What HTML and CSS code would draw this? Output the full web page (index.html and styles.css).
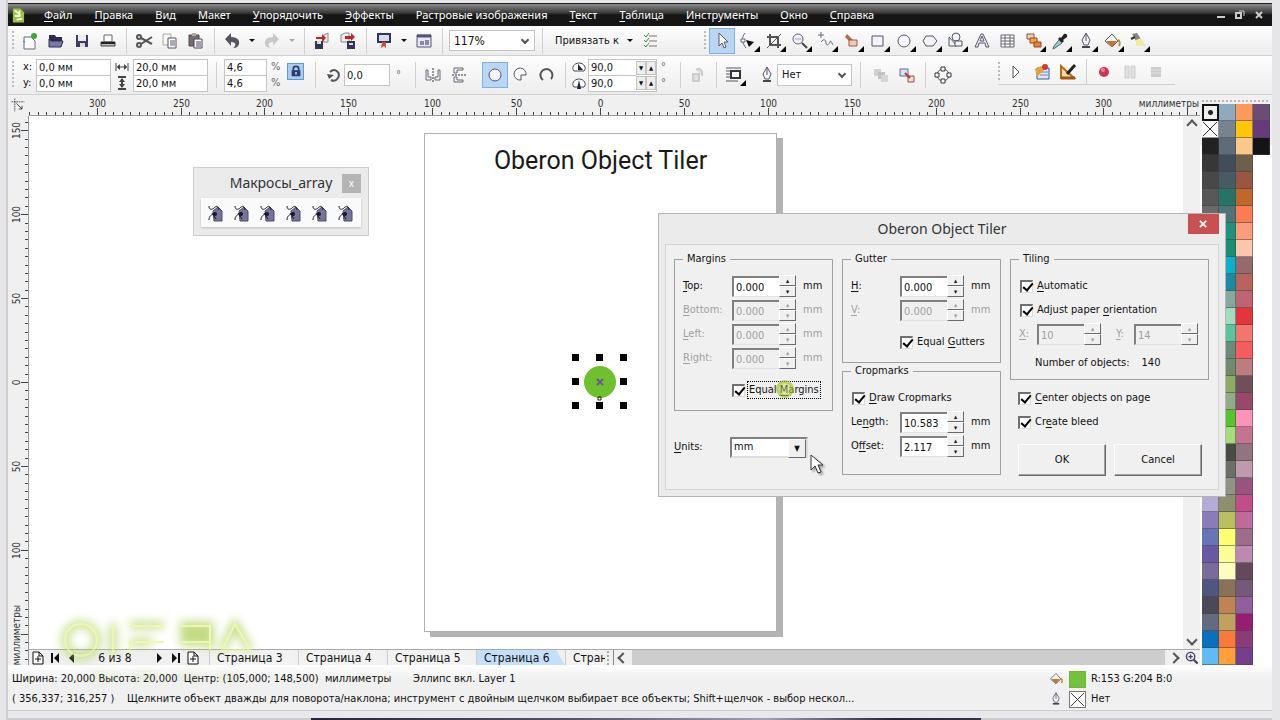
FILE: index.html
```html
<!DOCTYPE html>
<html lang="ru">
<head>
<meta charset="utf-8">
<title>Oberon Object Tiler</title>
<link rel="stylesheet" href="styles.css">
</head>
<body>
<svg class="defs" aria-hidden="true">
  <symbol id="i-new" viewBox="0 0 20 20"><path d="M4 6h7l4 4v8H4z" fill="#fbfbfb" stroke="#6b6b84"/><path d="M3 10l2 1" stroke="#6b6b84"/><circle cx="14" cy="5" r="3" fill="#3fa535"/></symbol>
  <symbol id="i-open" viewBox="0 0 20 20"><path d="M3 4h6l1 2h6v4H3z" fill="#2c2c52"/><path d="M3 16V8l2 2h12l-2 6z" fill="#7b7ba4" stroke="#2c2c52"/></symbol>
  <symbol id="i-save" viewBox="0 0 20 20"><path d="M4 4h12v12H4z" fill="#3c3c66"/><path d="M6 4h8v6H6z" fill="#eee"/><path d="M8 12h5v4H8z" fill="#ddd"/></symbol>
  <symbol id="i-print" viewBox="0 0 20 20"><path d="M6 4h8v7H6z" fill="#fff" stroke="#666"/><path d="M3 11h14v4H3z" fill="#bbb" stroke="#444"/><path d="M3 12h14" stroke="#222" stroke-width="2"/></symbol>
  <symbol id="i-cut" viewBox="0 0 20 20" fill="none" stroke="#555" stroke-width="2"><circle cx="5" cy="6" r="2"/><circle cx="5" cy="14" r="2"/><path d="M7 7l11 6M7 13l11-7"/></symbol>
  <symbol id="i-copy" viewBox="0 0 20 20"><path d="M3 3h8v11H3z" fill="#f4f4f4" stroke="#aaa"/><path d="M8 7h8v10H8z" fill="#fff" stroke="#555"/><path d="M10 10h5M10 12h5M10 14h5" stroke="#555577"/></symbol>
  <symbol id="i-paste" viewBox="0 0 20 20"><path d="M3 4h10v11H3z" fill="#7a6b66" stroke="#4f4a50"/><path d="M6 2h4v3H6z" fill="#aaa"/><path d="M8 8h8v9H8z" fill="#fff" stroke="#444466"/><path d="M10 11h5M10 13h5M10 15h5" stroke="#444466"/></symbol>
  <symbol id="i-undo" viewBox="0 0 20 20"><path d="M3 8l6-6v4c6 0 9 3 8 7-1 3-3 4-6 4 3-2 4-6-2-6v4z" fill="#555562"/></symbol>
  <symbol id="i-redo" viewBox="0 0 20 20"><path d="M17 8l-6-6v4c-6 0-9 3-8 7 1 3 3 4 6 4-3-2-4-6 2-6v4z" fill="#c9c9c9"/></symbol>
  <symbol id="i-import" viewBox="0 0 20 20"><path d="M12 4l4-2v9h-5z" fill="#eee" stroke="#888"/><path d="M3 10h8v8H3z" fill="#33335c"/><path d="M5 10h4v3H5z" fill="#ddd"/><path d="M4 6h6V3l4 4-4 4V8H4z" fill="#c02428"/></symbol>
  <symbol id="i-export" viewBox="0 0 20 20"><path d="M3 4l4-2h4v9H3z" fill="#eee" stroke="#888"/><path d="M9 10h8v8H9z" fill="#33335c"/><path d="M11 12h4v2h-4z" fill="#ddd"/><path d="M7 5h6V2l4 4-4 4V8H7z" fill="#c02428"/></symbol>
  <symbol id="i-launch" viewBox="0 0 20 20"><path d="M4 3h12v8H4z" fill="#d8dcf0" stroke="#33335c" stroke-width="2"/><path d="M8 11h4v6l-2-2-3 2z" fill="#d44a30"/></symbol>
  <symbol id="i-welcome" viewBox="0 0 20 20"><path d="M3 4h14v12H3z" fill="#e6e8f4" stroke="#555577"/><path d="M3 5h14" stroke="#555577" stroke-width="3"/><path d="M6 10h4v4H6zM11 9h4v5h-4z" fill="#88a"/></symbol>
  <symbol id="i-options" viewBox="0 0 20 20" fill="none"><path d="M9 5h8M9 10h8M9 15h8" stroke="#777"/><path d="M4 4l2 2 3-4M4 9l2 2 3-4M4 14l2 2 3-4" stroke="#3c8c3c"/></symbol>
  <symbol id="i-pick" viewBox="0 0 20 20"><path d="M7 2v13l3-3 2 5 2-1-2-5h4z" fill="#fff" stroke="#556"/></symbol>
  <symbol id="i-shape" viewBox="0 0 20 20"><path d="M7 2c-4 5-3 10 1 15" fill="none" stroke="#667"/><path d="M3 8h4v3H3z" fill="#fff" stroke="#667"/><path d="M8 9l8 2-5 5z" fill="#111"/></symbol>
  <symbol id="i-crop" viewBox="0 0 20 20" fill="none" stroke="#555"><path d="M3 6h11v11M6 3v11h11" stroke-width="2"/><path d="M3 17L17 3"/></symbol>
  <symbol id="i-zoom" viewBox="0 0 20 20"><circle cx="8" cy="8" r="5" fill="#eef" stroke="#667"/><path d="M12 12l5 5" stroke="#445" stroke-width="2"/><path d="M5 8h6" stroke="#aab"/></symbol>
  <symbol id="i-zoomto" viewBox="0 0 20 20"><circle cx="8" cy="8" r="6" fill="#eef" stroke="#446" stroke-width="2"/><path d="M12 12l6 6" stroke="#445" stroke-width="3"/><path d="M5 8h6M8 5v6" stroke="#446" stroke-width="2"/></symbol>
  <symbol id="i-free" viewBox="0 0 20 20" fill="none" stroke="#667"><path d="M5 1v6M2 4h6M5 11c3-4 5-2 5 1s3 2 4-1 2 2 3 3"/></symbol>
  <symbol id="i-smart" viewBox="0 0 20 20"><path d="M5 3l6 6-3 2-5-5z" fill="#b46a4c"/><path d="M7 9h8v6H7z" fill="#eecdb4" stroke="#a0543c"/></symbol>
  <symbol id="i-rect" viewBox="0 0 20 20"><path d="M4 5h11v10H4z" fill="#f2f2fa" stroke="#556"/></symbol>
  <symbol id="i-ellipse" viewBox="0 0 20 20"><circle cx="10" cy="10" r="6" fill="#f4f4fa" stroke="#556"/></symbol>
  <symbol id="i-poly" viewBox="0 0 20 20"><path d="M3 10l3-5h7l4 5-4 5H6z" fill="#f2f2fa" stroke="#556"/></symbol>
  <symbol id="i-shapes" viewBox="0 0 20 20" fill="#f2f2fa" stroke="#556"><path d="M3 6l8 9H3z"/><circle cx="10" cy="6" r="4"/><path d="M9 10h7v5H9z"/></symbol>
  <symbol id="i-letter" viewBox="0 0 20 20"><path d="M3 16L9 3h2l6 13h-3l-1-4H7l-1 4zM8 10h4l-2-5z" fill="#f2f2fa" stroke="#556"/></symbol>
  <symbol id="i-table" viewBox="0 0 20 20"><path d="M3 4h13v12H3zM3 7h13M3 10h13M3 13h13M7 4v12M12 4v12" fill="#fff" stroke="#667"/></symbol>
  <symbol id="i-blend" viewBox="0 0 20 20"><path d="M3 3h7v5H3z" fill="#e8d8a8" stroke="#855"/><path d="M6 7h7v5H6z" fill="#f4a83c" stroke="#943"/><path d="M10 11h7v5h-7z" fill="#f08020" stroke="#943"/></symbol>
  <symbol id="i-dropper" viewBox="0 0 20 20"><path d="M11 7l3-4c2-1 4 1 3 3l-4 3 1 1-2 2-4-4 2-2z" fill="#222"/><path d="M9 9l3 3-7 5-2 1 1-3z" fill="#9cc" stroke="#566"/></symbol>
  <symbol id="i-pen" viewBox="0 0 20 20"><path d="M10 2l4 7-2 5H8L6 9zM10 3v7" fill="#f4f4fa" stroke="#556"/><path d="M6 16h8" stroke="#445" stroke-width="2"/></symbol>
  <symbol id="i-bucket" viewBox="0 0 20 20"><path d="M3 10l7-7 6 7-6 6z" fill="#fff" stroke="#555"/><path d="M4 10h11l-5 6z" fill="#c8742c"/><path d="M16 9c2 1 2 4 1 6" fill="none" stroke="#c8882c" stroke-width="2"/></symbol>
  <symbol id="i-ifill" viewBox="0 0 20 20"><path d="M4 3l5-1 4 6-5 2z" fill="#888"/><path d="M3 8l4-2" stroke="#333" stroke-width="2"/><path d="M8 9l5-2 5 8H8z" fill="#eeeaa0"/></symbol>
  <symbol id="i-width" viewBox="0 0 16 16"><path d="M2 4v8M14 4v8M3 8h10M5 6v4M11 6v4" fill="none" stroke="#444"/><path d="M3 8l3-3v6zM13 8l-3-3v6z" fill="#444"/></symbol>
  <symbol id="i-height" viewBox="0 0 16 16"><path d="M4 2h8M4 14h8M8 4v8" fill="none" stroke="#444" stroke-width="2"/><path d="M8 3l-3 4h6zM8 13l-3-4h6z" fill="#444"/></symbol>
  <symbol id="i-lock" viewBox="0 0 16 16"><path d="M3 7h10v7H3z" fill="#2c3c6c"/><path d="M5 7V5c0-3 6-3 6 0v2" fill="none" stroke="#2c3c6c" stroke-width="2"/><path d="M7 9h2v3H7z" fill="#a9cdf2"/></symbol>
  <symbol id="i-rotate" viewBox="0 0 20 20"><path d="M6 7c5-5 11 1 8 6-2 3-5 3-7 2" fill="none" stroke="#555" stroke-width="2"/><path d="M3 9l7 1-5 4z" fill="#555"/></symbol>
  <symbol id="i-mirh" viewBox="0 0 20 20" fill="none" stroke="#667"><path d="M3 5v10h5v-3H5V5zM17 5v10h-5v-3h3V5z"/><path d="M10 3v14" stroke-dasharray="2 1" stroke="#333"/></symbol>
  <symbol id="i-mirv" viewBox="0 0 20 20" fill="none" stroke="#667"><path d="M5 3h9v2H8v3H5zM5 17h9v-2H8v-3H5z"/><path d="M3 10h14" stroke-dasharray="2 1" stroke="#333"/></symbol>
  <symbol id="i-pie" viewBox="0 0 20 20"><path d="M10 10h5A6 6 0 1 0 10 15z" fill="#f8f8f8" stroke="#556"/></symbol>
  <symbol id="i-arc" viewBox="0 0 20 20"><path d="M14 14a6 6 0 1 0-8 1" fill="none" stroke="#555" stroke-width="2"/></symbol>
  <symbol id="i-start" viewBox="0 0 16 16"><path d="M3 12c-3-3 0-8 5-8s8 5 5 8z" fill="#fff" stroke="#445"/><path d="M7 5l5 6H7z" fill="#223"/></symbol>
  <symbol id="i-end" viewBox="0 0 16 16"><path d="M3 12c-3-3 0-8 5-8s8 5 5 8z" fill="#fff" stroke="#445"/><path d="M8 5l2 9H6z" fill="#223"/></symbol>
  <symbol id="i-dir" viewBox="0 0 20 20"><path d="M5 9h6v7H5zM8 5c4-3 7 1 6 6" fill="#e2e2e2" stroke="#ccc" stroke-width="2"/></symbol>
  <symbol id="i-wrap" viewBox="0 0 20 20"><path d="M2 3h15M2 6h4M2 9h4M2 12h4M2 16h12" stroke="#556"/><path d="M7 6h9v7H7z" fill="#fff" stroke="#334" stroke-width="2"/></symbol>
  <symbol id="i-front" viewBox="0 0 20 20"><path d="M3 4h7v7H3z" fill="#d2d2d2"/><path d="M7 7h7v7H7z" fill="#c2c2c2"/><path d="M10 10h7v7h-7z" fill="#d6d6d6"/></symbol>
  <symbol id="i-back" viewBox="0 0 20 20"><path d="M3 4h8v7H3z" fill="#d8e4f0" stroke="#668"/><path d="M11 11h6v6h-6z" fill="#f2dcd4" stroke="#854"/><path d="M8 8l5 5" stroke="#c33" stroke-width="2"/></symbol>
  <symbol id="i-curve" viewBox="0 0 20 20"><circle cx="10" cy="10" r="6" fill="none" stroke="#556"/><path d="M8 2h4v4H8zM8 14h4v4H8zM2 8h4v4H2zM14 8h4v4h-4z" fill="#fff" stroke="#334"/></symbol>
  <symbol id="i-play" viewBox="0 0 20 20"><path d="M7 4l6 6-6 6z" fill="#fff" stroke="#555"/></symbol>
  <symbol id="i-macro" viewBox="0 0 20 20"><path d="M5 6h12v11H5z" fill="#dce8fa" stroke="#345c9c"/><path d="M8 10h8M8 13h8" stroke="#68c"/><path d="M3 7l6-3 4 3-8 8z" fill="#e8a040"/><circle cx="13" cy="5" r="3" fill="#cc3a30"/></symbol>
  <symbol id="i-vba" viewBox="0 0 20 20"><path d="M3 4v12h13z" fill="#f4d8a0" stroke="#b46a1c" stroke-width="2"/><path d="M3 16h14" stroke="#a0540c" stroke-width="3"/><path d="M9 12l8-9" stroke="#222" stroke-width="3"/></symbol>
  <symbol id="i-rec" viewBox="0 0 20 20"><circle cx="10" cy="10" r="5" fill="#cf3450"/><circle cx="9" cy="8" r="2" fill="#ea8898"/></symbol>
  <symbol id="i-pause" viewBox="0 0 20 20"><path d="M5 4h4v12H5zM11 4h4v12h-4z" fill="#e0e0e0" stroke="#ccc"/></symbol>
  <symbol id="i-stop" viewBox="0 0 20 20"><path d="M5 5h10v10H5z" fill="#ccc"/><path d="M5 8h10M5 11h10" stroke="#ddd"/></symbol>
  <symbol id="i-script" viewBox="0 0 20 20"><path d="M8 8l5-4 4 4v10H9z" fill="#77749c" stroke="#4b4870"/><path d="M4 3c0 4 3 4 5 2s4-3 5 2M4 17c0-4 2-5 6-7M7 10l4 6" fill="none" stroke="#16162a"/><circle cx="10" cy="11" r="2" fill="#16162a"/></symbol>
  <symbol id="i-page" viewBox="0 0 16 16"><path d="M3 2h6l4 4v8H3zM9 2v4h4M5 9h6M8 6v6" fill="#fff" stroke="#111"/></symbol>
  <symbol id="i-prev" viewBox="0 0 16 16"><path d="M10 3v10L5 8z" fill="#111"/></symbol>
  <symbol id="i-next" viewBox="0 0 16 16"><path d="M6 3v10l5-5z" fill="#111"/></symbol>
  <symbol id="i-first" viewBox="0 0 16 16"><path d="M12 3v10L7 8zM4 3h2v10H4z" fill="#111"/></symbol>
  <symbol id="i-last" viewBox="0 0 16 16"><path d="M4 3v10l5-5zM10 3h2v10h-2z" fill="#111"/></symbol>
  <symbol id="i-origin" viewBox="0 0 20 20"><path d="M2 6h16M6 2v16" stroke="#222" stroke-dasharray="2 1"/><path d="M8 8l7 7M15 11v4h-4" fill="none" stroke="#222"/></symbol>
  <symbol id="i-none" viewBox="0 0 17 17"><path d="M0 0h17v17H0z" fill="#fff"/><path d="M1 1l15 15M16 1L1 16" stroke="#222"/></symbol>
</svg>

<header class="menubar">
  <svg class="logo" viewBox="0 0 14 17"><path d="M1 1h8l4 4v11H1z" fill="#9ec23c"/><path d="M3 3l6 5M8 3v6H3M5 13l6-1" stroke="#f4fadc" stroke-width="2" fill="none"/></svg>
  <nav class="menu">
    <a href="#"><u>Ф</u>айл</a><a href="#"><u>П</u>равка</a><a href="#"><u>В</u>ид</a><a href="#"><u>М</u>акет</a><a href="#"><u>У</u>порядочить</a><a href="#"><u>Э</u>ффекты</a><a href="#">Р<u>а</u>стровые изображения</a><a href="#"><u>Т</u>екст</a><a href="#"><u>Т</u>аблица</a><a href="#"><u>И</u>нструменты</a><a href="#"><u>О</u>кно</a><a href="#"><u>С</u>правка</a>
  </nav>
  <div class="winbtns">
    <button aria-label="Свернуть"><svg viewBox="0 0 10 10"><path d="M1 7h8" stroke="#ccc" stroke-width="2"/></svg></button>
    <button aria-label="Восстановить"><svg viewBox="0 0 10 10" fill="none" stroke="#ccc"><path d="M1 3h5v5H1z" stroke-width="2"/><path d="M4 1h5v5"/></svg></button>
    <button aria-label="Закрыть"><svg viewBox="0 0 10 10"><path d="M2 2l6 6M8 2L2 8" stroke="#ccc" stroke-width="2"/></svg></button>
  </div>
</header>

<div class="bar bar-main">
  <span class="grip"></span>
  <button class="tb" aria-label="Создать"><svg><use href="#i-new"/></svg></button>
  <button class="tb" aria-label="Открыть"><svg><use href="#i-open"/></svg></button>
  <button class="tb" aria-label="Сохранить"><svg><use href="#i-save"/></svg></button>
  <button class="tb" aria-label="Печать"><svg><use href="#i-print"/></svg></button>
  <span class="sep"></span>
  <button class="tb" aria-label="Вырезать"><svg><use href="#i-cut"/></svg></button>
  <button class="tb" aria-label="Копировать"><svg><use href="#i-copy"/></svg></button>
  <button class="tb" aria-label="Вставить"><svg><use href="#i-paste"/></svg></button>
  <span class="sep"></span>
  <button class="tb" aria-label="Отменить"><svg><use href="#i-undo"/></svg></button>
  <button class="drop" aria-label="История отмены"></button>
  <button class="tb" aria-label="Повторить"><svg><use href="#i-redo"/></svg></button>
  <button class="drop off" aria-label="История повтора"></button>
  <span class="sep"></span>
  <button class="tb" aria-label="Импорт"><svg><use href="#i-import"/></svg></button>
  <button class="tb" aria-label="Экспорт"><svg><use href="#i-export"/></svg></button>
  <span class="sep"></span>
  <button class="tb" aria-label="Запуск приложений"><svg><use href="#i-launch"/></svg></button>
  <button class="drop" aria-label="Приложения"></button>
  <button class="tb" aria-label="Экран приветствия"><svg><use href="#i-welcome"/></svg></button>
  <span class="sep"></span>
  <span class="combo zoomlevel"><select aria-label="Масштаб"><option>117%</option></select></span>
  <span class="sep"></span>
  <button class="snap">Привязать к</button>
  <button class="drop" aria-label="Привязка"></button>
  <button class="tb" aria-label="Параметры"><svg><use href="#i-options"/></svg></button>
  <div class="toolbox">
    <span class="grip"></span>
    <button class="tb on" aria-label="Указатель"><svg><use href="#i-pick"/></svg></button>
    <button class="tb fly" aria-label="Форма"><svg><use href="#i-shape"/></svg></button>
    <button class="tb fly" aria-label="Обрезка"><svg><use href="#i-crop"/></svg></button>
    <button class="tb fly" aria-label="Лупа"><svg><use href="#i-zoom"/></svg></button>
    <button class="tb fly" aria-label="Свободная форма"><svg><use href="#i-free"/></svg></button>
    <button class="tb fly" aria-label="Интеллектуальная заливка"><svg><use href="#i-smart"/></svg></button>
    <button class="tb fly" aria-label="Прямоугольник"><svg><use href="#i-rect"/></svg></button>
    <button class="tb fly" aria-label="Эллипс"><svg><use href="#i-ellipse"/></svg></button>
    <button class="tb fly" aria-label="Многоугольник"><svg><use href="#i-poly"/></svg></button>
    <button class="tb fly" aria-label="Основные фигуры"><svg><use href="#i-shapes"/></svg></button>
    <button class="tb" aria-label="Текст"><svg><use href="#i-letter"/></svg></button>
    <button class="tb" aria-label="Таблица"><svg><use href="#i-table"/></svg></button>
    <button class="tb fly" aria-label="Перетекание"><svg><use href="#i-blend"/></svg></button>
    <button class="tb fly" aria-label="Пипетка"><svg><use href="#i-dropper"/></svg></button>
    <button class="tb fly" aria-label="Абрис"><svg><use href="#i-pen"/></svg></button>
    <button class="tb fly" aria-label="Заливка"><svg><use href="#i-bucket"/></svg></button>
    <button class="tb fly" aria-label="Интерактивная заливка"><svg><use href="#i-ifill"/></svg></button>
  </div>
</div>

<div class="bar bar-props">
  <span class="grip tall"></span>
  <div class="pair marks"><label for="px">x:</label><label for="py">y:</label></div>
  <div class="pair w-pos"><input id="px" value="0,0 мм"><input id="py" value="0,0 мм"></div>
  <div class="pair glyphs"><svg><use href="#i-width"/></svg><svg><use href="#i-height"/></svg></div>
  <div class="pair w-pos"><input aria-label="Ширина" value="20,0 мм"><input aria-label="Высота" value="20,0 мм"></div>
  <span class="sep wide"></span>
  <div class="pair w-scale"><input aria-label="Масштаб по x" value="4,6"><input aria-label="Масштаб по y" value="4,6"></div>
  <div class="pair percent"><span>%</span><span>%</span></div>
  <button class="lock" aria-label="Сохранять пропорции"><svg><use href="#i-lock"/></svg></button>
  <span class="sep xwide"></span>
  <svg class="ic"><use href="#i-rotate"/></svg>
  <input class="angle" aria-label="Угол поворота" value="0,0"><span class="deg">°</span>
  <span class="sep"></span>
  <button class="tb" aria-label="Отразить по горизонтали"><svg><use href="#i-mirh"/></svg></button>
  <button class="tb" aria-label="Отразить по вертикали"><svg><use href="#i-mirv"/></svg></button>
  <span class="sep bare"></span>
  <button class="tb on" aria-label="Эллипс"><svg><use href="#i-ellipse"/></svg></button>
  <button class="tb" aria-label="Сектор"><svg><use href="#i-pie"/></svg></button>
  <button class="tb" aria-label="Дуга"><svg><use href="#i-arc"/></svg></button>
  <span class="sep"></span>
  <div class="pair glyphs tight"><svg><use href="#i-start"/></svg><svg><use href="#i-end"/></svg></div>
  <div class="pair w-arc"><input aria-label="Начальный угол" value="90,0"><input aria-label="Конечный угол" value="90,0"></div>
  <div class="ministeps"><button aria-label="Меньше">▼</button><button aria-label="Больше">▲</button><button aria-label="Меньше">▼</button><button aria-label="Больше">▲</button></div>
  <div class="pair percent"><span>°</span><span>°</span></div>
  <span class="sep"></span>
  <button class="tb" aria-label="Направление"><svg><use href="#i-dir"/></svg></button>
  <span class="sep"></span>
  <button class="tb fly" aria-label="Обтекание текстом"><svg><use href="#i-wrap"/></svg></button>
  <span class="sep bare"></span>
  <svg class="ic"><use href="#i-pen"/></svg>
  <span class="combo outline"><select aria-label="Толщина абриса"><option>Нет</option></select></span>
  <span class="sep wide"></span>
  <button class="tb" aria-label="На передний план"><svg><use href="#i-front"/></svg></button>
  <button class="tb" aria-label="На задний план"><svg><use href="#i-back"/></svg></button>
  <span class="sep"></span>
  <button class="tb" aria-label="Преобразовать в кривую"><svg><use href="#i-curve"/></svg></button>
  <div class="macrobar">
    <span class="grip"></span>
    <button class="tb" aria-label="Выполнить"><svg><use href="#i-play"/></svg></button>
    <button class="tb" aria-label="Диспетчер макросов"><svg><use href="#i-macro"/></svg></button>
    <button class="tb" aria-label="Редактор"><svg><use href="#i-vba"/></svg></button>
    <span class="sep"></span>
    <button class="tb" aria-label="Запись"><svg><use href="#i-rec"/></svg></button>
    <button class="tb" aria-label="Пауза"><svg><use href="#i-pause"/></svg></button>
    <button class="tb" aria-label="Стоп"><svg><use href="#i-stop"/></svg></button>
  </div>
</div>

<main class="workspace">
  <div class="corner"><svg><use href="#i-origin"/></svg></div>
  <svg class="ruler ruler-h" id="rulerH"></svg>
  <svg class="ruler ruler-v" id="rulerV"></svg>
  <section class="canvas">
    <div class="sheet"><h1>Oberon Object Tiler</h1></div>
    <svg class="selection" viewBox="0 0 56 56">
      <circle cx="28" cy="28" r="16" fill="#6ec02e"/>
      <path d="M25 25l6 6M31 25l-6 6" stroke="#6a5a9c" stroke-width="2"/>
      <path d="M26 43h3v3h-3z" fill="none" stroke="#222"/>
      <path d="M0 0h7v7H0zM24 0h7v7h-7zM48 0h7v7h-7zM0 24h7v7H0zM48 24h7v7h-7zM0 48h7v7H0zM24 48h7v7h-7zM48 48h7v7h-7z" fill="#000"/>
    </svg>
    <aside class="floatbar">
      <div class="floatbar-head"><span>Макросы_array</span><button aria-label="Закрыть">x</button></div>
      <div class="floatbar-body">
        <button class="tb" aria-label="Макрос 1"><svg><use href="#i-script"/></svg></button><button class="tb" aria-label="Макрос 2"><svg><use href="#i-script"/></svg></button><button class="tb" aria-label="Макрос 3"><svg><use href="#i-script"/></svg></button><button class="tb" aria-label="Макрос 4"><svg><use href="#i-script"/></svg></button><button class="tb" aria-label="Макрос 5"><svg><use href="#i-script"/></svg></button><button class="tb" aria-label="Макрос 6"><svg><use href="#i-script"/></svg></button>
      </div>
    </aside>
  </section>
  <div class="vscroll"><button class="chev up" aria-label="Вверх"></button><div class="vthumb"></div><button class="chev down" aria-label="Вниз"></button></div>
  <div class="palette"><span class="palette-grip"></span><div class="swatches" id="swatches"></div></div>
  <footer class="pages">
    <div class="pagenav">
      <button aria-label="Добавить страницу в начало"><svg><use href="#i-page"/></svg></button>
      <button aria-label="Первая"><svg><use href="#i-first"/></svg></button>
      <button aria-label="Предыдущая"><svg><use href="#i-prev"/></svg></button>
      <span class="count">6 из 8</span>
      <button aria-label="Следующая"><svg><use href="#i-next"/></svg></button>
      <button aria-label="Последняя"><svg><use href="#i-last"/></svg></button>
      <button aria-label="Добавить страницу в конец"><svg><use href="#i-page"/></svg></button>
    </div>
    <div class="tabs"><button>Страница 3</button><button>Страница 4</button><button>Страница 5</button><button class="active">Страница 6</button><button class="rest">Стран</button></div>
    <span class="split"></span>
    <div class="hscroll"><button class="chev left" aria-label="Влево"></button><div class="hthumb"></div><button class="chev right" aria-label="Вправо"></button></div>
    <button class="nav" aria-label="Навигатор"><svg><use href="#i-zoomto"/></svg></button>
  </footer>
</main>

<div class="status">
  <div class="line"><span class="dims">Ширина: 20,000 Высота: 20,000&nbsp; Центр: (105,000; 148,500)&nbsp; миллиметры</span><span class="object">Эллипс вкл. Layer 1</span>
    <span class="chip"><svg><use href="#i-bucket"/></svg><i class="fill"></i>R:153 G:204 B:0</span></div>
  <div class="line"><span class="coords">( 356,337; 316,257 )</span><span class="hint">Щелкните объект дважды для поворота/наклона; инструмент с двойным щелчком выбирает все объекты; Shift+щелчок - выбор нескол...</span>
    <span class="chip"><svg><use href="#i-pen"/></svg><svg class="nofill"><use href="#i-none"/></svg>Нет</span></div>
</div>
<div class="taskedge"></div>

<form class="dialog" role="dialog" aria-label="Oberon Object Tiler">
  <div class="dialog-head"><h2>Oberon Object Tiler</h2><button type="button" class="close" aria-label="Закрыть"><svg viewBox="0 0 10 10"><path d="M1 1l7 7M8 1L1 8" stroke="#fff" stroke-width="2"/></svg></button></div>
  <div class="dialog-body">
    <div class="col">
      <fieldset><legend>Margins</legend>
        <div class="row"><label for="mt"><u>T</u>op:</label><input id="mt" class="num" value="0.000"><span class="spin"><button type="button" aria-label="Больше">▴</button><button type="button" aria-label="Меньше">▾</button></span><span>mm</span></div>
        <div class="row off"><label for="mb"><u>B</u>ottom:</label><input id="mb" class="num" value="0.000" disabled><span class="spin"><button type="button" disabled aria-label="Больше">▴</button><button type="button" disabled aria-label="Меньше">▾</button></span><span>mm</span></div>
        <div class="row off"><label for="ml"><u>L</u>eft:</label><input id="ml" class="num" value="0.000" disabled><span class="spin"><button type="button" disabled aria-label="Больше">▴</button><button type="button" disabled aria-label="Меньше">▾</button></span><span>mm</span></div>
        <div class="row off"><label for="mr"><u>R</u>ight:</label><input id="mr" class="num" value="0.000" disabled><span class="spin"><button type="button" disabled aria-label="Больше">▴</button><button type="button" disabled aria-label="Меньше">▾</button></span><span>mm</span></div>
        <div class="check inset spaced focus"><input type="checkbox" id="em" checked><label for="em">Equal <u>M</u>argins</label></div>
      </fieldset>
      <div class="units"><label for="un"><u>U</u>nits:</label><span class="classic"><select id="un"><option>mm</option></select></span></div>
    </div>
    <div class="col">
      <fieldset><legend>Gutter</legend>
        <div class="row"><label for="gh"><u>H</u>:</label><input id="gh" class="num" value="0.000"><span class="spin"><button type="button" aria-label="Больше">▴</button><button type="button" aria-label="Меньше">▾</button></span><span>mm</span></div>
        <div class="row off"><label for="gv"><u>V</u>:</label><input id="gv" class="num" value="0.000" disabled><span class="spin"><button type="button" disabled aria-label="Больше">▴</button><button type="button" disabled aria-label="Меньше">▾</button></span><span>mm</span></div>
        <div class="check inset spaced"><input type="checkbox" id="eg" checked><label for="eg">Equal <u>G</u>utters</label></div>
      </fieldset>
      <fieldset class="crop"><legend>Cropmarks</legend>
        <div class="check"><input type="checkbox" id="dc" checked><label for="dc"><u>D</u>raw Cropmarks</label></div>
        <div class="row"><label for="cl">Le<u>n</u>gth:</label><input id="cl" class="num" value="10.583"><span class="spin"><button type="button" aria-label="Больше">▴</button><button type="button" aria-label="Меньше">▾</button></span><span>mm</span></div>
        <div class="row"><label for="co">O<u>f</u>fset:</label><input id="co" class="num" value="2.117"><span class="spin"><button type="button" aria-label="Больше">▴</button><button type="button" aria-label="Меньше">▾</button></span><span>mm</span></div>
      </fieldset>
    </div>
    <div class="col last">
      <fieldset class="tiling"><legend>Tiling</legend>
        <div class="check"><input type="checkbox" id="au" checked><label for="au"><u>A</u>utomatic</label></div>
        <div class="check"><input type="checkbox" id="ap" checked><label for="ap">Adjust paper <u>o</u>rientation</label></div>
        <div class="row off xy"><label for="tx"><u>X</u>:</label><input id="tx" class="num" value="10" disabled><span class="spin"><button type="button" disabled aria-label="Больше">▴</button><button type="button" disabled aria-label="Меньше">▾</button></span><label for="ty"><u>Y</u>:</label><input id="ty" class="num" value="14" disabled><span class="spin"><button type="button" disabled aria-label="Больше">▴</button><button type="button" disabled aria-label="Меньше">▾</button></span></div>
        <div class="total"><span>Number of objects:</span><span>140</span></div>
      </fieldset>
      <div class="check"><input type="checkbox" id="cp" checked><label for="cp"><u>C</u>enter objects on page</label></div>
      <div class="check"><input type="checkbox" id="cb" checked><label for="cb">Cr<u>e</u>ate bleed</label></div>
      <div class="actions"><button type="button">OK</button><button type="button">Cancel</button></div>
    </div>
  </div>
  <span class="click"></span>
  <svg class="cursor" viewBox="0 0 14 22"><path d="M1 1v15l4-4 3 7 3-1-3-7h5z" fill="#fff" stroke="#333"/></svg>
</form>

<svg class="watermark" viewBox="0 0 230 90" aria-hidden="true">
  <g class="glow" fill="none" stroke="#a8cc4c" stroke-width="7"><circle cx="33" cy="38" r="16"/><path d="M65 22v30M82 23h34M82 40h22M132 23h30v24M132 40h30M174 48l13-26 15 26"/><path d="M136 30h24v8h-24z" fill="#a8cc4c"/><path d="M40 74h150" stroke-width="5" stroke-dasharray="30 12" opacity=".35"/></g>
  <g fill="none" stroke="#e6f68c" stroke-width="2"><circle cx="33" cy="38" r="16"/><path d="M65 22v30M82 24h34M82 40h34M82 40v12M132 24h30v24M132 40h30M174 48l13-26 15 26z"/></g>
</svg>
<script src="app.js"></script>
</body>
</html>
```
FILE: styles.css
```css
* { box-sizing: border-box; }
html, body { height: 100%; }
body {
  margin: 0; padding: 3px 8px 0; overflow: hidden; position: relative;
  display: flex; flex-direction: column;
  background: linear-gradient(90deg, #e6e6e8 6px, #cfcfd2 6px, #cfcfd2 8px, #e6e6e8 8px);
  font: 11px/16px "DejaVu Sans Condensed", "DejaVu Sans", sans-serif; color: #111;
}
button, input, select { font: inherit; color: inherit; margin: 0; padding: 0; border: 0; background: none; border-radius: 0; }
button { display: flex; align-items: center; justify-content: center; }
select { appearance: none; }
u { text-underline-offset: 2px; }
.defs { position: absolute; width: 0; height: 0; }

.menubar { display: flex; align-items: center; flex: none; height: 23px; padding: 0 8px 0 4px; color: #fff; background: linear-gradient(#8a8a8a, #3a3a3a 40%, #161616 50%, #161616); border-top: 1px solid #222; }
.logo { width: 13px; height: 17px; }
.menu { display: flex; gap: 22px; flex: 1; margin-left: 19px; font: 11px/20px "Noto Sans", "Open Sans", sans-serif; white-space: nowrap; }
.menu a { color: inherit; text-decoration: none; }
.winbtns { display: flex; gap: 9px; }
.winbtns svg { width: 10px; height: 10px; display: block; }

.bar { display: flex; align-items: center; flex: none; padding-left: 4px; background: linear-gradient(#fdfdfd, #ededed); border-bottom: 1px solid #cfcfcf; }
.bar-main { height: 30px; }
.bar-props { height: 39px; }
.grip { width: 5px; height: 20px; background: radial-gradient(circle at 1px 1px, #bbb 1px, transparent 1px) 0 0 / 5px 4px; }
.grip.tall { height: 28px; }
.tb { position: relative; flex: none; width: 26px; height: 26px; }
.tb svg, .ic { width: 20px; height: 20px; flex: none; }
.tb.on { background: #b9d7f5; border: 1px solid #7fb0e0; }
.tb.fly::after { content: ""; position: absolute; right: 1px; bottom: 2px; border: 3px solid #000; border-top-color: transparent; border-left-color: transparent; }
.sep { flex: none; width: 10px; height: 26px; background: linear-gradient(#d0d0d0, #d0d0d0) center / 1px 100% no-repeat; }
.sep.wide { width: 16px; }
.sep.xwide { width: 18px; }
.sep.bare { background: none; }
.drop { width: 14px; height: 20px; }
.drop::after { content: ""; border: 3px solid transparent; border-top-color: #111; border-bottom: 0; }
.drop.off::after { border-top-color: #aaa; }
.combo { position: relative; background: #fff; border: 1px solid #c4c4c4; }
.combo select { width: 100%; height: 100%; padding: 0 4px; }
.combo::after { content: ""; position: absolute; right: 6px; top: 6px; width: 4px; height: 4px; border: solid #555; border-width: 0 2px 2px 0; transform: rotate(45deg); pointer-events: none; }
.zoomlevel { width: 86px; height: 21px; margin: 0 2px; font-size: 12px; }
.snap { width: 72px; margin-left: 4px; white-space: nowrap; }
.toolbox { display: flex; align-items: center; margin-left: 41px; }

.pair { display: flex; flex-direction: column; flex: none; }
.pair input { height: 17px; width: 100%; padding: 0 2px; background: #fff; border: 1px solid #c4c4c4; }
.pair input + input { margin-top: -1px; }
.pair svg { width: 16px; height: 16px; }
.pair label, .pair span { height: 16px; }
.marks { width: 19px; padding-left: 6px; }
.w-pos { width: 75px; }
.glyphs { width: 22px; align-items: center; }
.glyphs.tight { width: 18px; }
.w-scale { width: 43px; }
.percent { width: 18px; padding-left: 4px; color: #666; }
.lock { width: 17px; height: 17px; margin: 0 2px 8px; background: #a9cdf2; border: 1px solid #5c9ad8; }
.lock svg { width: 14px; height: 14px; }
.angle { width: 46px; height: 22px; padding: 0 2px; background: #fff; border: 1px solid #c4c4c4; }
.deg { width: 20px; padding-left: 6px; color: #666; }
.w-arc { width: 48px; }
.w-arc input { border-right: 0; }
.ministeps { display: grid; grid-template-columns: 10px 10px; gap: 1px 0; padding: 1px 0; background: #fff; border: 1px solid #c4c4c4; border-left: 0; }
.ministeps button { width: 10px; height: 14px; font-size: 6px; background: #eee; border: 1px solid #c4c4c4; }
.outline { width: 75px; height: 22px; }
.macrobar { display: flex; align-items: center; height: 26px; margin: 0 0 6px 42px; border-bottom: 1px solid #cfcfcf; padding-right: 6px; }

.workspace { flex: 1; min-height: 0; display: grid; grid-template: 21px minmax(0, 1fr) 16px / 21px minmax(0, 1fr) 17px 72px; background: #f0f0f0; }
.corner { grid-area: 1 / 1; }
.corner svg { width: 20px; height: 20px; padding: 2px; display: block; }
.ruler { display: block; width: 100%; height: 100%; }
.ruler text { font: 10px "DejaVu Sans Condensed", sans-serif; fill: #333; }
.ruler path { stroke: #444; }
.ruler-h { grid-area: 1 / 2 / 2 / 4; border-bottom: 1px solid #999; }
.ruler-v { grid-area: 2 / 1 / 4 / 2; border-right: 1px solid #999; }
.canvas { grid-area: 2 / 2; position: relative; background: #fff; overflow: hidden; }
.sheet { position: absolute; left: 395px; top: 17px; width: 353px; height: 499px; background: #fff; border: 1px solid #b0b0b0; box-shadow: 6px 5px 0 #b3b3b3; }
.sheet h1 { margin: 10px 0 0; text-align: center; font: 400 25px/34px Roboto, "Noto Sans", sans-serif; color: #1a1a1a; }
.selection { position: absolute; left: 543px; top: 238px; width: 56px; height: 56px; }
.floatbar { position: absolute; left: 164px; top: 51px; width: 176px; height: 69px; padding: 5px 7px; background: #ebebeb; border: 1px solid #ccc; }
.floatbar-head { display: flex; align-items: center; height: 20px; font: 14px/20px "Noto Sans", sans-serif; color: #333; }
.floatbar-head span { flex: 1; padding-left: 19px; text-align: center; }
.floatbar-head button { width: 19px; height: 19px; background: #b4b4b4; color: #fff; font-size: 10px; }
.floatbar-body { display: flex; align-items: center; height: 29px; margin-top: 5px; padding-left: 1px; background: #fafafa; box-shadow: 0 1px 2px #bbb; }

.vscroll { grid-area: 2 / 3; display: flex; flex-direction: column; align-items: center; background: #f0f0f0; }
.vthumb { width: 15px; height: 68%; margin-bottom: auto; background: linear-gradient(#f0f0f0 50%, #cdcdcd 50%); }
.chev { width: 16px; height: 18px; }
.chev::after { content: ""; width: 6px; height: 6px; border: solid #555; border-width: 2px 0 0 2px; }
.up::after { transform: rotate(45deg); }
.down::after { transform: rotate(225deg); }
.left::after { transform: rotate(-45deg); }
.right::after { transform: rotate(135deg); }
.palette { grid-area: 1 / 4 / 4 / 5; position: relative; padding: 5px 2px 0; background: linear-gradient(#f0f0f0 50px, #fff 50px); }
.palette-grip { display: block; height: 4px; background: radial-gradient(circle at 1px 1px, #bbb 1px, transparent 1px) 0 0 / 4px 4px; }
.swatches { display: grid; grid-template: repeat(33, 17px) / repeat(4, 17px); grid-auto-flow: column; }
.swatch { border: solid #4448; border-width: 0 1px 1px 0; }
.swatch svg { display: block; width: 100%; height: 100%; }
.swatch.well { background: radial-gradient(circle, #222 2px, #eee 3px); border: 2px solid #111; }

.pages { grid-area: 3 / 2 / 4 / 4; display: flex; align-items: stretch; border-top: 1px solid #aaa; font-size: 12px; }
.pagenav { display: flex; align-items: center; width: 172px; margin-right: 8px; flex: none; }
.pagenav button { width: 17px; }
.pagenav svg { width: 16px; height: 16px; }
.count { flex: 1; text-align: center; }
.tabs { display: flex; width: 396px; overflow: hidden; flex: none; }
.tabs button { flex: none; width: 89px; padding-left: 7px; justify-content: flex-start; background: #f2f2f2; clip-path: polygon(0 0, 90% 0, 100% 100%, 0 100%); border-left: 1px solid #ccc; white-space: nowrap; }
.tabs .active { background: #c4dffa; }
.tabs .rest { width: 40px; clip-path: none; }
.split { width: 9px; border-right: 1px solid #888; background: radial-gradient(circle at 3px 2px, #aaa 1px, transparent 1px) 0 0 / 9px 4px; }
.hscroll { flex: 1; display: flex; }
.hscroll .chev { width: 18px; height: 15px; }
.hthumb { flex: 1; background: #cdcdcd; }
.nav { width: 17px; }
.nav svg { width: 14px; height: 14px; }

.status { flex: none; height: 46px; padding: 4px 4px 2px; background: linear-gradient(#fff, #f0f0f0 30%); border-bottom: 1px solid #ccc; }
.line { display: flex; align-items: center; height: 20px; white-space: nowrap; }
.dims { width: 401px; }
.coords { width: 115px; }
.object, .hint { flex: 1; }
.chip { display: flex; align-items: center; width: 220px; gap: 5px; flex: none; }
.chip svg { width: 16px; height: 16px; }
.chip .fill, .chip .nofill { width: 17px; height: 17px; border: 1px solid #777; }
.chip .fill { background: #76c13c; border-color: #6db833; }
.taskedge { flex: none; height: 9px; background: linear-gradient(#e8e8ec 7px, transparent 7px), linear-gradient(90deg, #ccc 24%, #24243a 24%, #55556a 45%, #a0a0b0 60%, #24243a 70%, #33334a 77%, #ccc 77%); }

.dialog { position: absolute; left: 658px; top: 213px; width: 568px; padding: 0 6px 6px; background: #ebebeb; border: 1px solid #b4b4b4; line-height: 14px; }
.dialog-head { display: flex; height: 30px; }
.dialog-head h2 { flex: 1; margin: 0; padding-left: 31px; text-align: center; font: 14px/30px "Noto Sans", "Open Sans", sans-serif; color: #333; }
.close { width: 31px; height: 20px; background: #c75050; }
.close svg { width: 9px; height: 9px; }
.dialog-body { display: flex; gap: 9px; height: 246px; padding: 7px 8px; background: #f0f0f0; border: 1px solid #d4d4d4; }
.col { width: 159px; }
.col.last { width: 199px; }
fieldset { margin: 0; padding: 8px 0 8px 8px; border: 1px solid #a0a0a0; min-width: 0; }
legend { margin-left: 0; padding: 0 4px; line-height: 14px; height: 14px; }
.row { display: flex; align-items: center; height: 24px; }
.row label { width: 49px; }
.off { color: #a0a0a0; }
.num { width: 47px; height: 21px; padding: 1px 2px 0; background: #fff; border: solid #808080; border-width: 2px 0 0 2px; border-bottom: 1px solid #e3e3e3; }
.off .num { background: #f0f0f0; color: #a0a0a0; }
.spin { width: 17px; margin-right: 7px; }
.spin button { width: 17px; height: 11px; font-size: 7px; line-height: 8px; background: #f0f0f0; border: 1px solid #fff; border-right-color: #696969; border-bottom-color: #696969; }
.check { display: flex; align-items: center; height: 24px; gap: 3px; padding-left: 1px; }
.check input { appearance: none; position: relative; width: 13px; height: 13px; background: #fff; border: solid #707070; border-width: 2px 1px 1px 2px; border-right-color: #ddd; border-bottom-color: #ddd; }
.check input:checked::after { content: ""; position: absolute; left: 3px; top: -1px; width: 4px; height: 8px; border: solid #000; border-width: 0 2px 2px 0; transform: rotate(40deg); }
.check label { padding: 1px; }
.inset { padding-left: 49px; }
.spaced { margin-top: 8px; }
.focus label { outline: 1px dotted #000; }
.crop { margin-top: 1px; padding-bottom: 16px; }
.tiling { padding-bottom: 4px; }
.tiling .row label { width: 18px; }
.xy .spin + label { margin-left: 8px; }
.total { display: flex; gap: 12px; height: 24px; margin: 5px 0 0 16px; align-items: center; }
.tiling + .check { margin-top: 6px; }
.last > .check { padding-left: 8px; }
.actions { display: flex; gap: 8px; margin: 10px 0 0 8px; }
.actions button { width: 88px; height: 32px; background: #f0f0f0; border: 1px solid #fff; border-right-color: #696969; border-bottom-color: #696969; box-shadow: inset -1px -1px 0 #a0a0a0; }
.units { display: flex; align-items: center; height: 20px; margin-top: 26px; }
.units label { width: 56px; }
.classic { position: relative; width: 78px; height: 21px; background: #fff; border: 2px solid #808080; border-right-color: #ddd; border-bottom-color: #ddd; }
.classic select { display: block; width: 100%; height: 100%; padding: 0 2px; }
.classic::after { content: "▼"; position: absolute; right: 0; top: 0; width: 16px; height: 17px; text-align: center; font-size: 8px; line-height: 17px; background: #f0f0f0; border: 1px solid #fff; border-right-color: #696969; border-bottom-color: #696969; pointer-events: none; }
.click { position: absolute; left: 117px; top: 166px; width: 18px; height: 18px; border-radius: 50%; background: radial-gradient(#c4dc5066 35%, #a0c020aa 50%, #a0c02099); }
.cursor { position: absolute; left: 151px; top: 240px; width: 14px; height: 22px; filter: drop-shadow(2px 2px 1px #0005); }
.watermark { position: absolute; left: 48px; top: 602px; width: 230px; height: 90px; pointer-events: none; opacity: .7; }
.glow { filter: blur(5px); }
```
FILE: app.js
```js
const NS = 'http://www.w3.org/2000/svg';
const STEP = 83.9;

function draw(svg, d) {
  const path = document.createElementNS(NS, 'path');
  path.setAttribute('d', d);
  svg.append(path);
}

function label(svg, text, x, y, turned) {
  const el = document.createElementNS(NS, 'text');
  el.textContent = text;
  el.setAttribute('text-anchor', 'middle');
  if (turned) el.setAttribute('transform', `translate(${x} ${y}) rotate(-90)`);
  else { el.setAttribute('x', x); el.setAttribute('y', y); }
  svg.append(el);
}

function ruler(svg, zero, length, vertical, unit, labelEnd) {
  let d = '';
  const first = Math.ceil(-zero / STEP * 10);
  const last = Math.floor((length - zero) / STEP * 10);
  for (let i = first; i <= last; i++) {
    const p = Math.round(zero + i * STEP / 10) + 0.5;
    const size = i % 10 === 0 ? 7 : 3;
    d += vertical ? `M20 ${p}h${-size}` : `M${p} 20v${-size}`;
    if (i % 10 === 0 && p < labelEnd) {
      const text = Math.abs(i * 5);
      if (vertical) label(svg, text, 12, p, true);
      else label(svg, text, p, 12, false);
    }
  }
  draw(svg, d);
  if (vertical) label(svg, unit, 12, length - 30, true);
  else label(svg, unit, length - 31, 12, false);
}

const h = document.getElementById('rulerH');
ruler(h, 571, h.clientWidth, false, 'миллиметры', h.clientWidth - 70);
const v = document.getElementById('rulerV');
ruler(v, 266, v.clientHeight, true, 'миллиметры', v.clientHeight - 70);

const columns = [
  'well none 222222 373737 484848 585858 6a6a6a 7a7a7a 8a8a8a 9a9a9a aaaaaa bababa cacaca dadada eaeaea ffffff 4a4a80 5a5a90 6a6aa0 7a7ab0 8a8ac0 9a9ad0 a4a0d0 b4acd6 8a7cb8 6674b8 6a58a0 7a6c98 4f5680 4b4858 646b80 0a6fbe 62baf2',
  '8fa9bd 75848f 5c6c78 424c5a 455c64 257466 4f7478 1a957c 17906f 08b2cc 1c8ba0 85aa9c a2dcbc 58c69c 6c8a7a 708a6c 8cac64 90ac88 58c42c a6dc7c 484c44 6c7064 909484 8c906c b8c060 fdfd70 fdfd98 fdfdc0 8a7258 c08454 bfa260 fa7a38 ff9f38',
  'fb9a5c fdc60a fbc88c 6e5f4c 9a5640 c0682c fa7c54 fb9c7c fbc6ae 966a6c b8645c c06474 e4343c f47470 f45c60 bc7c80 705058 984868 fb94b8 c47490 907480 bf9aac 985480 c44c88 c06a9c 9c6e8c bc88b4 64485c 765878 90609c 981c70 8a3c78 753f90',
  '6b4c74 663a7c 141414'
];
const box = document.getElementById('swatches');
for (const color of columns.join(' ').split(' ')) {
  const cell = document.createElement('span');
  cell.className = 'swatch';
  if (color === 'well') cell.classList.add('well');
  else if (color === 'none') cell.innerHTML = '<svg><use href="#i-none"/></svg>';
  else cell.style.background = '#' + color;
  box.append(cell);
}
```
